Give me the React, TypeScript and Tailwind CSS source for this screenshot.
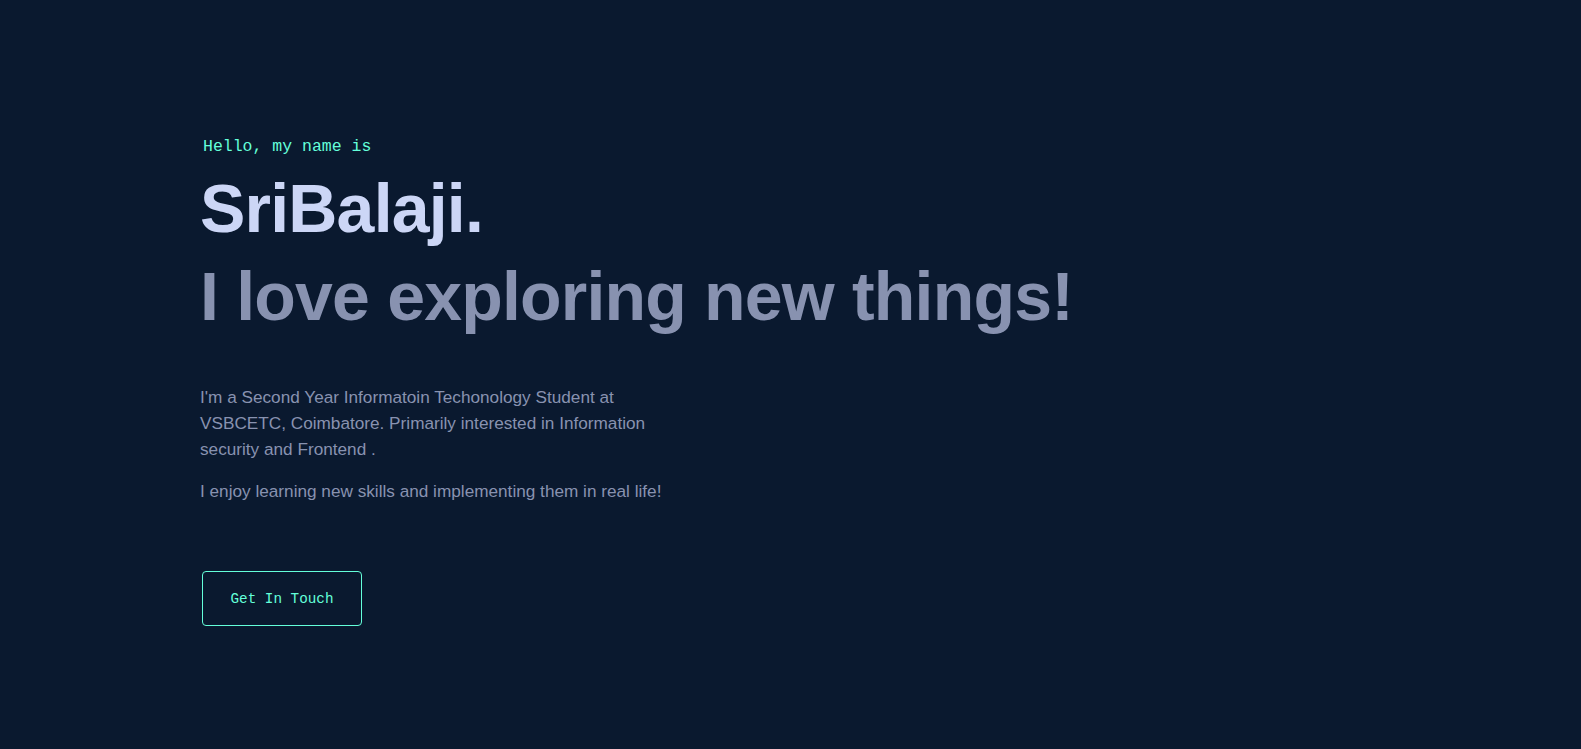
export default function App(): React.ReactElement {
	return (
		// Page
		<div className="min-h-screen w-full bg-[#0a192f]">
			{/* Hero */}
			<section className="min-h-screen flex flex-col justify-center items-start pt-[16px] pl-[200px] pr-[150px]">
				{/* Greeting */}
				<p className="ml-[3px] text-[16.5px] leading-[16px] text-[#64ffda] font-['Liberation_Mono',monospace]">
					Hello, my name is
				</p>
				{/* Name */}
				<h1 className="mt-[15px] text-[68px] leading-[76px] font-bold tracking-[-0.8px] text-[#ccd6f6] font-['Liberation_Sans',Arial,sans-serif]">
					SriBalaji.
				</h1>
				{/* Tagline */}
				<h2 className="mt-[12px] text-[68px] leading-[76px] font-bold tracking-[-0.8px] text-[#8892b0] font-['Liberation_Sans',Arial,sans-serif]">
					I love exploring new things!
				</h2>
				{/* About text */}
				<div className="mt-[50px] max-w-[490px] flex flex-col gap-[16px] text-[17.2px] leading-[26px] text-[#8892b0] font-['Liberation_Sans',Arial,sans-serif]">
					<p>
						I'm a Second Year Informatoin Techonology Student at VSBCETC,
						Coimbatore. Primarily interested in Information security and
						Frontend .
					</p>
					<p>I enjoy learning new skills and implementing them in real life!</p>
				</div>
				{/* Call to action */}
				<a
					href="#contact"
					className="mt-[67px] ml-[2px] w-[160px] h-[55px] pt-[3px] flex items-center justify-center rounded-[4px] border border-[#64ffda] text-[14.3px] text-[#64ffda] font-['Liberation_Mono',monospace]"
				>
					Get In Touch
				</a>
			</section>
		</div>
	)
}
